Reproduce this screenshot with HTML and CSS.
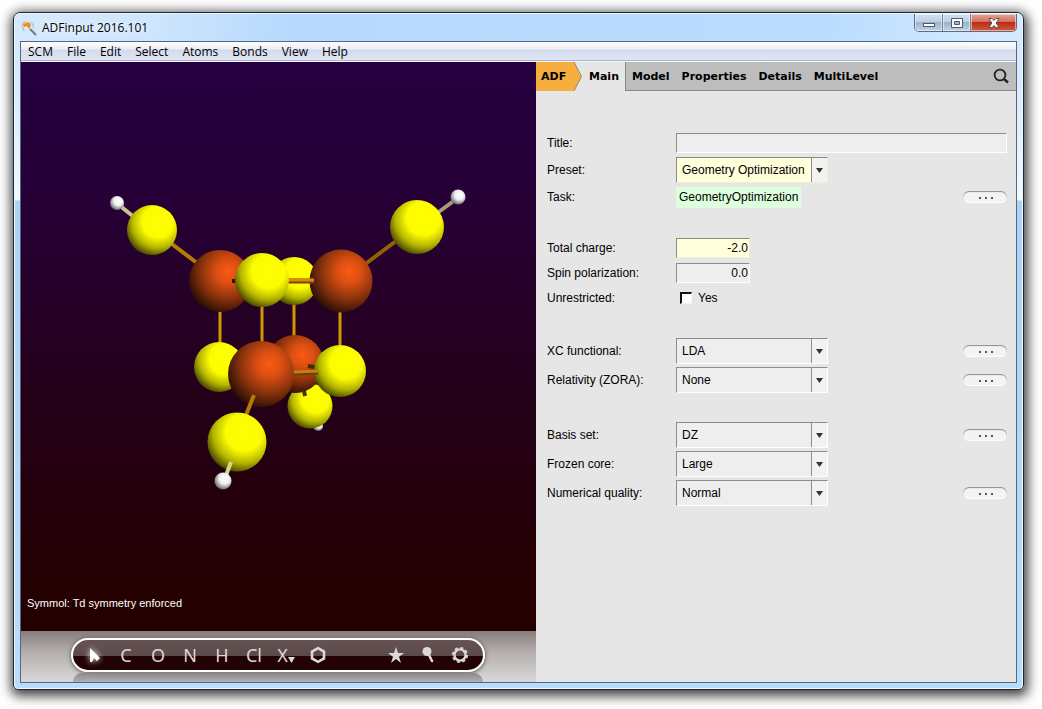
FILE: index.html
```
<!DOCTYPE html>
<html lang="en">
<head>
    <meta charset="UTF-8">
    <meta name="viewport" content="width=device-width, initial-scale=1.0">
    <title>ADFinput 2016.101</title>
    <link rel="stylesheet" href="styles.css">
</head>
<body>

    <div class="window">
        <header class="titlebar">
            <svg class="app-icon" width="16" height="16" viewBox="0 0 16 16">
                <path d="M3 2Q0 6 3 11M5 1L3 3M10 2Q13 4 12 8" fill="none" stroke="#c9c4bd" stroke-width="1.5"/>
                <path d="M2 4L8 2L10 5L8 9L6 6L3 7Z" fill="#f5851f"/>
                <path d="M9 9L15 15" stroke="#777" stroke-width="2"/>
            </svg>
            <span class="title">ADFinput 2016.101</span>
            <div class="window-buttons">
                <button class="win-btn" aria-label="Minimize">
                    <svg width="14" height="12" viewBox="0 0 14 12"><rect x="1.500" y="6.500" width="11" height="3" fill="#fff" stroke="#535666"/></svg>
                </button>
                <button class="win-btn" aria-label="Maximize">
                    <svg width="14" height="12" viewBox="0 0 14 12"><path d="M1.500 1.500H12.500V10.500H1.500ZM4.500 4.500V7.500H9.500V4.500Z" fill="#fff" fill-rule="evenodd" stroke="#535666"/></svg>
                </button>
                <button class="win-btn win-close" aria-label="Close">
                    <svg width="14" height="12" viewBox="0 0 14 12"><path d="M2 1.500H5L7 3.500L9 1.500H12L9.200 6L12 10.500H9L7 8.500L5 10.500H2L4.800 6Z" fill="#fff" stroke="#535666"/></svg>
                </button>
            </div>
        </header>

        <div class="client">
            <nav class="menubar">
                <button>SCM</button>
                <button>File</button>
                <button>Edit</button>
                <button>Select</button>
                <button>Atoms</button>
                <button>Bonds</button>
                <button>View</button>
                <button>Help</button>
            </nav>

            <main class="content">
                <section class="viewer">
                    <div class="scene">
                        <svg class="molecule" viewBox="21 62 515 569" role="img" aria-label="Molecule">
                            <defs>
                                <radialGradient id="sulfur" cx="0.62" cy="0.34" r="0.74">
                                    <stop offset="0" stop-color="#ffff00"/>
                                    <stop offset="0.42" stop-color="#fcfc00"/>
                                    <stop offset="0.7" stop-color="#b4b400"/>
                                    <stop offset="1" stop-color="#2c2c00"/>
                                </radialGradient>
                                <radialGradient id="iron" cx="0.63" cy="0.35" r="0.74">
                                    <stop offset="0" stop-color="#fb5a14"/>
                                    <stop offset="0.25" stop-color="#dc4f12"/>
                                    <stop offset="0.6" stop-color="#88320c"/>
                                    <stop offset="1" stop-color="#160802"/>
                                </radialGradient>
                                <radialGradient id="hydrogen" cx="0.6" cy="0.36" r="0.7">
                                    <stop offset="0" stop-color="#fff"/>
                                    <stop offset="0.45" stop-color="#f0f0f0"/>
                                    <stop offset="1" stop-color="#555"/>
                                </radialGradient>
                            </defs>

                            <!-- upper arms -->
                            <g stroke-width="4">
                                <path d="M119 205L134 217" stroke="#c9c490"/>
                                <path d="M168 241L197 263" stroke="#b97a06"/>
                                <path d="M455 200L436 214" stroke="#a39f74"/>
                                <path d="M396 241L364 265" stroke="#8f6205"/>
                            </g>
                            <circle cx="117" cy="203" r="7" fill="url(#hydrogen)"/>
                            <circle cx="458" cy="197" r="7.500" fill="url(#hydrogen)"/>
                            <circle cx="152" cy="230" r="25" fill="url(#sulfur)"/>
                            <circle cx="417" cy="227" r="27" fill="url(#sulfur)"/>

                            <!-- vertical bonds of the cube -->
                            <g stroke="#7b4d04" stroke-width="4">
                                <path d="M220 300V350M262 300V350M294 300V340M340 300V350"/>
                            </g>
                            <g stroke="#cf9510" stroke-width="2">
                                <path d="M220 300V350M262 300V350M294 300V340M340 300V350"/>
                            </g>

                            <!-- back atoms -->
                            <circle cx="318" cy="426" r="5" fill="url(#hydrogen)"/>
                            <circle cx="310" cy="406" r="22.500" fill="url(#sulfur)"/>
                            <circle cx="295" cy="364" r="29" fill="url(#iron)"/>
                            <path d="M304 391L305 396" stroke="#4a3604" stroke-width="4"/>
                            <path d="M308 366L320 368" stroke="#4a2a04" stroke-width="4"/>
                            <circle cx="294" cy="281" r="24" fill="url(#sulfur)"/>
                            <circle cx="220" cy="281" r="31" fill="url(#iron)"/>
                            <path d="M232 281H240" stroke="#2c1602" stroke-width="4"/>
                            <circle cx="219" cy="367" r="25" fill="url(#sulfur)"/>

                            <!-- front atoms -->
                            <circle cx="341" cy="281" r="31.500" fill="url(#iron)"/>
                            <path d="M287 281H314" stroke="#7b4304" stroke-width="5"/>
                            <path d="M287 280H314" stroke="#d98a10" stroke-width="3"/>
                            <circle cx="262" cy="280" r="27" fill="url(#sulfur)"/>
                            <circle cx="340" cy="371" r="26" fill="url(#sulfur)"/>
                            <circle cx="261" cy="374" r="33" fill="url(#iron)"/>
                            <path d="M294 373L318 372" stroke="#6b4204" stroke-width="5"/>
                            <path d="M294 372L318 371" stroke="#c28010" stroke-width="3"/>
                            <path d="M254 395L246 415" stroke="#b9780a" stroke-width="4"/>
                            <circle cx="237" cy="442" r="29.500" fill="url(#sulfur)"/>
                            <path d="M231 462L225 478" stroke="#d8d48c" stroke-width="4"/>
                            <circle cx="223" cy="481" r="8.500" fill="url(#hydrogen)"/>
                        </svg>
                        <p class="status">Symmol: Td symmetry enforced</p>
                    </div>

                    <div class="dock">
                        <div class="toolbar">
                            <button class="tool tool-active" aria-label="Select">
                                <svg width="16" height="18" viewBox="0 0 16 18"><path d="M4 2V16L6 16L8 12L11 15L14 12Z" fill="#fff"/></svg>
                            </button>
                            <button class="tool">C</button>
                            <button class="tool">O</button>
                            <button class="tool">N</button>
                            <button class="tool">H</button>
                            <button class="tool">Cl</button>
                            <button class="tool">X<svg class="drop" width="7" height="6" viewBox="0 0 7 6"><path d="M0 0H7L3.500 6Z" fill="#ddd8d8"/></svg></button>
                            <button class="tool" aria-label="Ring">
                                <svg width="18" height="18" viewBox="0 0 18 18"><path d="M9 2.200L15 5.600V12.400L9 15.800L3 12.400V5.600Z" fill="none" stroke="#ddd8d8" stroke-width="2.600"/></svg>
                            </button>
                            <button class="tool tool-right" aria-label="Favourites">
                                <svg width="18" height="18" viewBox="0 0 18 18"><path d="M9 1L11 7H17L12 10.700L14 17L9 13L4 17L6 10.700L1 7H7Z" fill="#ddd8d8"/></svg>
                            </button>
                            <button class="tool" aria-label="Optimize">
                                <svg width="18" height="18" viewBox="0 0 18 18"><circle cx="8" cy="5.500" r="4.500" fill="#ddd8d8"/><path d="M9 7L13 15" stroke="#ddd8d8" stroke-width="2.600" stroke-linecap="round"/></svg>
                            </button>
                            <button class="tool" aria-label="Settings">
                                <svg width="18" height="18" viewBox="0 0 18 18">
                                    <circle cx="9" cy="9" r="5.600" fill="none" stroke="#ddd8d8" stroke-width="2.400"/>
                                    <circle cx="9" cy="9" r="7.200" fill="none" stroke="#ddd8d8" stroke-width="1.800" stroke-dasharray="3.100 2.555"/>
                                </svg>
                            </button>
                        </div>
                        <div class="reflection"></div>
                    </div>
                </section>

                <section class="panel">
                    <nav class="tabs">
                        <button class="tab-adf">
                            <span>ADF</span>
                            <svg width="8" height="29" viewBox="0 0 8 29"><path d="M0 0L7.500 14.500L0 29Z" fill="#f6ae3f"/><path d="M0 0L7.500 14.500L0 29" fill="none" stroke="#888"/></svg>
                        </button>
                        <button class="tab tab-current">Main</button>
                        <div class="tab-rest">
                            <button class="tab">Model</button>
                            <button class="tab">Properties</button>
                            <button class="tab">Details</button>
                            <button class="tab">MultiLevel</button>
                            <button class="search" aria-label="Search">
                                <svg width="16" height="16" viewBox="0 0 16 16"><circle cx="7" cy="7" r="5.400" fill="none" stroke="#222" stroke-width="1.800"/><path d="M11 11L15 14.500" stroke="#222" stroke-width="2.400"/></svg>
                            </button>
                        </div>
                    </nav>

                    <form class="form">
                        <div class="group">
                            <div class="row">
                                <label for="title">Title:</label>
                                <input class="field field-wide" id="title" type="text">
                            </div>
                            <div class="row">
                                <label for="preset">Preset:</label>
                                <div class="combo changed">
                                    <select id="preset"><option>Geometry Optimization</option></select>
                                    <span class="arrow"><svg width="7" height="5" viewBox="0 0 7 5"><path d="M0 0H7L3.500 5Z" fill="#333"/></svg></span>
                                </div>
                            </div>
                            <div class="row">
                                <span>Task:</span>
                                <output class="task">GeometryOptimization</output>
                                <button class="more" type="button" aria-label="Task details"><i></i><i></i><i></i></button>
                            </div>
                        </div>

                        <div class="group">
                            <div class="row">
                                <label for="charge">Total charge:</label>
                                <input class="field field-number changed" id="charge" type="text" value="-2.0">
                            </div>
                            <div class="row">
                                <label for="spin">Spin polarization:</label>
                                <input class="field field-number" id="spin" type="text" value="0.0">
                            </div>
                            <div class="row">
                                <span>Unrestricted:</span>
                                <label class="check"><input type="checkbox">Yes</label>
                            </div>
                        </div>

                        <div class="group">
                            <div class="row">
                                <label for="xc">XC functional:</label>
                                <div class="combo">
                                    <select id="xc"><option>LDA</option></select>
                                    <span class="arrow"><svg width="7" height="5" viewBox="0 0 7 5"><path d="M0 0H7L3.500 5Z" fill="#333"/></svg></span>
                                </div>
                                <button class="more" type="button" aria-label="XC details"><i></i><i></i><i></i></button>
                            </div>
                            <div class="row">
                                <label for="relativity">Relativity (ZORA):</label>
                                <div class="combo">
                                    <select id="relativity"><option>None</option></select>
                                    <span class="arrow"><svg width="7" height="5" viewBox="0 0 7 5"><path d="M0 0H7L3.500 5Z" fill="#333"/></svg></span>
                                </div>
                                <button class="more" type="button" aria-label="Relativity details"><i></i><i></i><i></i></button>
                            </div>
                        </div>

                        <div class="group">
                            <div class="row">
                                <label for="basis">Basis set:</label>
                                <div class="combo">
                                    <select id="basis"><option>DZ</option></select>
                                    <span class="arrow"><svg width="7" height="5" viewBox="0 0 7 5"><path d="M0 0H7L3.500 5Z" fill="#333"/></svg></span>
                                </div>
                                <button class="more" type="button" aria-label="Basis details"><i></i><i></i><i></i></button>
                            </div>
                            <div class="row">
                                <label for="core">Frozen core:</label>
                                <div class="combo">
                                    <select id="core"><option>Large</option></select>
                                    <span class="arrow"><svg width="7" height="5" viewBox="0 0 7 5"><path d="M0 0H7L3.500 5Z" fill="#333"/></svg></span>
                                </div>
                            </div>
                            <div class="row">
                                <label for="quality">Numerical quality:</label>
                                <div class="combo">
                                    <select id="quality"><option>Normal</option></select>
                                    <span class="arrow"><svg width="7" height="5" viewBox="0 0 7 5"><path d="M0 0H7L3.500 5Z" fill="#333"/></svg></span>
                                </div>
                                <button class="more" type="button" aria-label="Quality details"><i></i><i></i><i></i></button>
                            </div>
                        </div>
                    </form>
                </section>
            </main>
        </div>
    </div>

</body>
</html>
```
FILE: styles.css
```
* {
    box-sizing: border-box;
}

body {
    margin: 0;
    padding: 12px 18px 19px 13px;
    min-height: 100vh;
    display: flex;
    background-color: #fff;
    font-family: "Liberation Sans", Arial, sans-serif;
    font-size: 12px;
    color: #000;
}

button, input, select {
    font: inherit;
    color: inherit;
    margin: 0;
    padding: 0;
    border: none;
    border-radius: 0;
    background: none;
}

svg {
    display: block;
}

.window {
    flex: 1;
    min-width: 0;
    display: flex;
    flex-direction: column;
    padding: 0 6px 6px;
    border: 1px solid #1c2733;
    border-radius: 7px 7px 5px 5px;
    background: linear-gradient(#d3e8fd 0, #d9ebfd 80px, #f2f9ff 187px, #aed2f3 188px, #badcfd 100%);
    box-shadow: inset 0 0 0 1px #eef8ff, 1px 3px 12px 3px rgba(0, 0, 0, 0.75);
}

.titlebar {
    height: 28px;
    display: flex;
    align-items: center;
    margin: 0 -5px;
    padding-left: 6px;
    border-top: 1px solid #eef8ff;
    border-radius: 6px 6px 0 0;
    background: linear-gradient(100deg, #d5e9fd 0, #cde5fd 14%, #b6d9fd 28%, #b9dcff 80%, #d3e9ff 96%);
}

.title {
    font-family: "Open Sans", sans-serif;
    margin-left: 5px;
    text-shadow: 0 0 8px #fff, 0 0 8px #fff;
}

.window-buttons {
    display: flex;
    align-self: flex-start;
    margin-left: auto;
    margin-right: 5px;
    border: 1px solid #5c6b80;
    border-top: none;
    border-radius: 0 0 5px 5px;
    overflow: hidden;
}

.win-btn {
    width: 28px;
    height: 17px;
    display: flex;
    justify-content: center;
    align-items: center;
    border-right: 1px solid #74859b;
    background: linear-gradient(#d3e2f1 0, #bdcfe2 45%, #9db3cb 50%, #bdd3e8 100%);
    box-shadow: inset 0 0 0 1px rgba(255, 255, 255, 0.5);
}

.win-close {
    width: 45px;
    border-right: none;
    background: linear-gradient(#e5a497 0, #d5715e 45%, #b72c17 50%, #d8593b 100%);
}

.client {
    flex: 1;
    display: flex;
    flex-direction: column;
    border: 1px solid #53677e;
}

.menubar {
    height: 20px;
    display: flex;
    font-family: "Open Sans", sans-serif;
    border-bottom: 1px solid #f4f6fb;
    background: linear-gradient(#fff 0, #e9edf6 38%, #d3daed 42%, #dfe5f4 92%, #b1b6c6 96%);
}

.menubar button {
    padding: 0 7px;
}

.content {
    flex: 1;
    display: grid;
    grid-template-columns: minmax(0, 515fr) minmax(0, 480fr);
}

.viewer {
    display: flex;
    flex-direction: column;
}

.scene {
    flex: 1;
    display: grid;
    background: linear-gradient(#260040 0, #260036 25%, #240018 60%, #240002 90%, #240000 100%);
}

.molecule {
    grid-area: 1 / 1;
    width: 100%;
    height: 100%;
}

.status {
    grid-area: 1 / 1;
    align-self: end;
    margin: 0;
    padding: 0 6px 21px;
    font-size: 11px;
    line-height: 14px;
    color: #fff;
}

.dock {
    height: 51px;
    display: flex;
    flex-direction: column;
    padding: 7px 51px 0 50px;
    background: linear-gradient(#877c7c 0, #b3adad 40%, #d9d8d8 100%);
}

.toolbar {
    height: 34px;
    display: flex;
    align-items: center;
    padding: 0 7px 0 5px;
    border: 2px solid #fff;
    border-radius: 17px;
    background: linear-gradient(#655353 0, #5c4949 53%, #220202 54%, #220202 100%);
    box-shadow: 0 1px 4px rgba(0, 0, 0, 0.6);
}

.tool {
    flex: 0 1 32px;
    display: flex;
    justify-content: center;
    align-items: center;
    font-family: "Noto Sans", sans-serif;
    font-size: 18px;
    line-height: 24px;
    color: #ddd8d8;
}

.tool-active svg {
    filter: drop-shadow(0 0 3px #fff);
}

.tool-right {
    margin-left: auto;
}

.drop {
    align-self: flex-end;
    margin-bottom: 4px;
}

.reflection {
    flex: 1;
    margin: 1px 2px 0;
    border-radius: 10px 10px 0 0;
    background: linear-gradient(#8e8787, #b3aeae);
}

.panel {
    background-color: #e6e6e6;
}

.tabs {
    height: 29px;
    display: flex;
    font-family: "DejaVu Sans", Verdana, sans-serif;
    font-size: 11px;
    font-weight: bold;
}

.tab-adf {
    display: flex;
}

.tab-adf span {
    padding: 0 0 0 5px;
    width: 38px;
    line-height: 29px;
    text-align: left;
    background-color: #f6ae3f;
}

.tab {
    padding: 0 6px;
}

.tab-current {
    padding: 0 6px 0 7px;
}

.tab-rest {
    flex: 1;
    display: flex;
    border-left: 1px solid #888;
    border-bottom: 1px solid #888;
    background-color: #bdbdbd;
}

.search {
    margin-left: auto;
    padding: 0 7px;
}

.form {
    display: flex;
    flex-direction: column;
    gap: 29px;
    padding: 41px 9px 20px 11px;
}

.group {
    display: flex;
    flex-direction: column;
    gap: 3px;
}

.row {
    min-height: 22px;
    display: grid;
    grid-template-columns: 129px minmax(0, 1fr) auto;
    align-items: center;
    justify-items: start;
}

.field {
    height: 20px;
    padding: 0 1px 0 4px;
    border: 1px solid;
    border-color: #8c8c8c #fff #fff #8c8c8c;
    background-color: #eee;
}

.field-wide {
    width: 100%;
}

.field-number {
    width: 74px;
    text-align: right;
}

.combo {
    width: 152px;
    height: 26px;
    display: grid;
    border: 1px solid;
    border-color: #8c8c8c #fff #fff #8c8c8c;
    background-color: #eee;
}

.combo select {
    grid-area: 1 / 1;
    appearance: none;
    width: 100%;
    padding: 0 16px 0 5px;
}

.arrow {
    grid-area: 1 / 1;
    justify-self: end;
    width: 16px;
    display: flex;
    align-items: center;
    justify-content: center;
    border-left: 1px solid #8c8c8c;
    background-color: #f2f2f2;
    pointer-events: none;
}

.changed {
    border-color: #8c8c7c #f0f0d0 #f0f0d0 #8c8c7c;
    background-color: #ffffdc;
}

.task {
    padding: 0 3px;
    line-height: 21px;
    background-color: #dfd;
}

.check {
    display: flex;
    align-items: center;
    gap: 6px;
    padding-left: 4px;
}

.check input {
    appearance: none;
    width: 12px;
    height: 12px;
    border: 2px solid;
    border-color: #111 #f4f4f4 #f4f4f4 #111;
    border-width: 2px 1px 1px 2px;
    background-color: #fff;
}

.more {
    width: 44px;
    height: 12px;
    display: flex;
    align-items: center;
    justify-content: center;
    gap: 4px;
    padding: 1px 0 0 2px;
    border-radius: 6px;
    background-color: #f3f3f3;
    box-shadow: inset 0 1px 1px #8c8c8c, inset 0 -1px 1px #fff;
}

.more i {
    width: 2px;
    height: 2px;
    background-color: #555;
}
```
